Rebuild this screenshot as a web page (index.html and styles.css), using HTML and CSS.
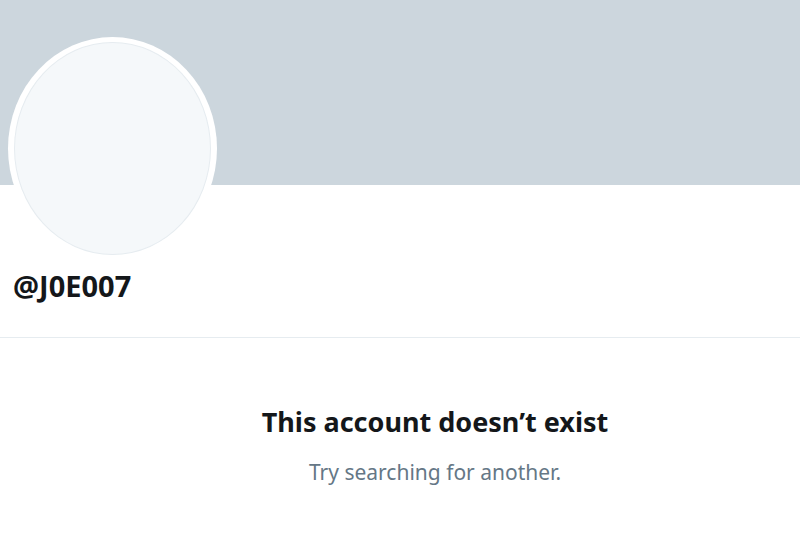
FILE: index.html
```html
<!DOCTYPE html>
<html lang="en">
<head>
  <meta charset="UTF-8" />
  <title>Profile</title>
  <link rel="stylesheet" href="styles.css">
</head>
<body>
  <div class="banner"></div>

  <div class="profile-head">
    <div class="avatar">
      <div class="avatar-inner"></div>
    </div>
    <div class="handle">@J0E007</div>
  </div>

  <div class="empty-state">
    <h2>This account doesn’t exist</h2>
    <p>Try searching for another.</p>
  </div>
</body>
</html>
```

FILE: styles.css
```css
body {
  font-family: "Noto Sans", "Open Sans", Arial, sans-serif;
  background-color: #ffffff;
  margin: 0;
  color: #14171a;
}

.banner {
  height: 185px;
  background-color: #ccd6dd;
}

.profile-head {
  display: flow-root;
  padding: 0 13px;
  border-bottom: 1px solid #e6ecf0;
  height: 152px;
}

.avatar {
  width: 209px;
  height: 223px;
  margin-top: -148px;
  margin-left: -5px;
  border-radius: 50%;
  background-color: #ffffff;
  display: flex;
  align-items: center;
  justify-content: center;
}

.avatar-inner {
  width: 195px;
  height: 211px;
  border-radius: 50%;
  background-color: #f5f8fa;
  border: 1px solid #e6ecf0;
}

.handle {
  font-size: 29px;
  font-weight: bold;
  margin-top: 6px;
}

.empty-state {
  text-align: center;
  padding-top: 65px;
  padding-left: 70px;
}

.empty-state h2 {
  font-size: 27px;
  font-weight: bold;
  margin: 0;
}

.empty-state p {
  font-size: 21px;
  color: #657786;
  margin: 18px 0 0;
}
```
